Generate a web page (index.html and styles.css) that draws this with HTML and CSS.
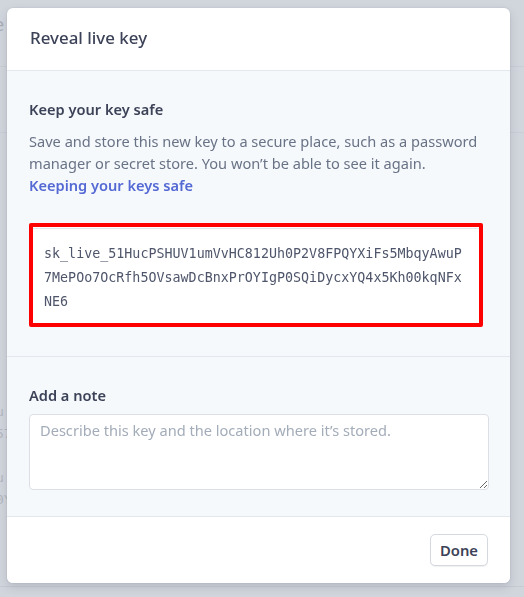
FILE: index.html
```html
<!DOCTYPE html>
<html lang="en">
<head>
<meta charset="utf-8">
<title>Reveal live key</title>
<link rel="stylesheet" href="styles.css">
</head>
<body>
<div class="backdrop">
  <div class="bg-row bg-row-first"><span class="bg-text">e</span></div>
  <div class="bg-row bg-row-second"></div>
  <div class="bg-row bg-row-tall">
    <div class="bg-snippet">u<br>57<br><br>u<br>0Y</div>
  </div>
</div>

<div class="modal" role="dialog" aria-labelledby="modal-title">
  <header class="modal-header">
    <h1 id="modal-title" class="modal-title">Reveal live key</h1>
  </header>

  <section class="modal-section">
    <h2 class="section-title">Keep your key safe</h2>
    <p class="section-text">Save and store this new key to a secure place, such as a password manager or secret store. You won’t be able to see it again.<br><a class="link" href="#">Keeping your keys safe</a></p>
    <div class="key-highlight">
      <div class="key-field">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</div>
    </div>
  </section>

  <section class="modal-section modal-section-note">
    <label class="section-title" for="note">Add a note</label>
    <textarea id="note" class="note-input" placeholder="Describe this key and the location where it’s stored."></textarea>
  </section>

  <footer class="modal-footer">
    <button class="btn" type="button">Done</button>
  </footer>
</div>
</body>
</html>
```

FILE: styles.css
```css
* { box-sizing: border-box; }

html, body {
  margin: 0;
  padding: 0;
  height: 100%;
}

body {
  background: #d1d5dc;
  font-family: "Noto Sans", "Lato", sans-serif;
  overflow: hidden;
}

.backdrop {
  display: flex;
  flex-direction: column;
  height: 597px;
}

.bg-row {
  flex: none;
  border-bottom: 1px solid #c9cdd5;
}

.bg-row-first { height: 67px; }
.bg-row-second { height: 66px; }
.bg-row-tall { height: 454px; padding-top: 268px; border-bottom-color: #c6cad2; }

.bg-text {
  display: block;
  color: #a9aeb8;
  font-size: 18px;
  line-height: 24px;
  margin-left: -6px;
  padding-top: 12px;
}

.bg-snippet {
  color: #b2b7c0;
  font-size: 13px;
  line-height: 22px;
  margin-left: -4px;
  font-family: "DejaVu Sans Mono", monospace;
}

.modal {
  position: fixed;
  top: 8px;
  left: 7px;
  width: 503px;
  height: 575px;
  background: #ffffff;
  border-radius: 6px;
  box-shadow: 0 4px 10px rgba(60, 66, 87, 0.18), 0 0 0 1px rgba(60, 66, 87, 0.04);
  display: flex;
  flex-direction: column;
  overflow: hidden;
}

.modal-header {
  height: 63px;
  flex: none;
  display: flex;
  align-items: center;
  padding: 0 23px;
  border-bottom: 1px solid #e3e8ee;
}

.modal-title {
  margin: 0;
  font-size: 16.9px;
  font-weight: 500;
  color: #3c4257;
  line-height: 24px;
  padding-bottom: 2px;
}

.modal-section {
  background: #f6f9fc;
  padding: 27px 22px 29px;
  border-bottom: 1px solid #e3e8ee;
  display: flex;
  flex-direction: column;
}

.modal-section-note {
  padding: 27px 21px 26px 22px;
  flex: 1;
}

.section-title {
  margin: 0;
  font-size: 14.6px;
  font-weight: 600;
  color: #3c4257;
  line-height: 22px;
}

.section-text {
  margin: 10px 0 0;
  font-size: 14.6px;
  line-height: 22px;
  color: #697386;
}

.link {
  color: #5469d4;
  font-weight: 600;
  text-decoration: none;
}

.key-highlight {
  margin-top: 27px;
  width: 454px;
  border: 4px solid #ff0000;
  border-radius: 2px;
  background: #ffffff;
}

.key-field {
  border-top: 1px solid #e3e8ee;
  margin-top: 1px;
  padding: 13px 14px 9px 11px;
  font-family: "DejaVu Sans Mono", monospace;
  font-size: 13.35px;
  line-height: 24px;
  color: #4f566b;
  word-break: break-all;
}

.note-input {
  margin-top: 8px;
  height: 76px;
  width: 460px;
  border: 1px solid #dcdfe5;
  border-radius: 4px;
  padding: 4px 10px;
  font-family: inherit;
  font-size: 14.6px;
  line-height: 22px;
  color: #3c4257;
  background: #ffffff;
  resize: vertical;
  outline: none;
}

.note-input::placeholder { color: #a3acb9; }

.modal-footer {
  height: 66px;
  flex: none;
  display: flex;
  justify-content: flex-end;
  align-items: center;
  padding: 0 22px 1px;
  background: #ffffff;
}

.btn {
  height: 32px;
  width: 58px;
  border: 1px solid #d5d9df;
  border-radius: 5px;
  background: #ffffff;
  box-shadow: 0 1px 1px rgba(0, 0, 0, 0.06);
  font-family: inherit;
  font-size: 14.8px;
  font-weight: 600;
  color: #3c4257;
  padding: 0;
  cursor: pointer;
}
```
